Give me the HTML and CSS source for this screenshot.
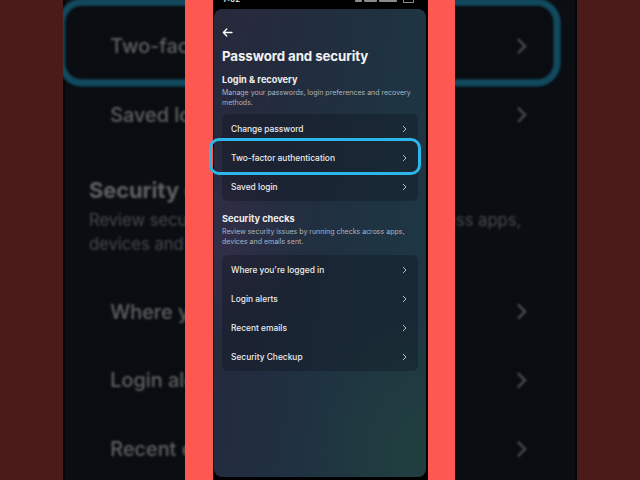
FILE: index.html
```html
<!DOCTYPE html>
<html lang="en">
<head>
<meta charset="utf-8">
<title>Password and security</title>
<link rel="stylesheet" href="styles.css">
</head>
<body>
<div class="frame">
  <div class="side"></div>
  <div class="stage">
    <div class="ghost" aria-hidden="true">
      <div class="screen">
        <div class="back"><svg width="11" height="9" viewBox="0 0 11 9"><path d="M10 4.5H1.5M4.8 1L1.3 4.5L4.8 8" fill="none" stroke="#fff" stroke-width="1.3" stroke-linecap="round" stroke-linejoin="round"/></svg></div>
        <h1 class="title">Password and security</h1>
        <h2 class="heading">Login &amp; recovery</h2>
        <p class="desc">Manage your passwords, login preferences and recovery methods.</p>
        <ul class="list list-first">
          <li class="row"><span>Change password</span><svg class="chev" width="5" height="8" viewBox="0 0 5 8"><path d="M1 1l3 3-3 3" fill="none" stroke="#b8bcc2" stroke-width="1"/></svg></li>
          <li class="row"><span>Two-factor authentication</span><svg class="chev" width="5" height="8" viewBox="0 0 5 8"><path d="M1 1l3 3-3 3" fill="none" stroke="#b8bcc2" stroke-width="1"/></svg></li>
          <li class="row"><span>Saved login</span><svg class="chev" width="5" height="8" viewBox="0 0 5 8"><path d="M1 1l3 3-3 3" fill="none" stroke="#b8bcc2" stroke-width="1"/></svg></li>
        </ul>
        <h2 class="heading heading-second">Security checks</h2>
        <p class="desc">Review security issues by running checks across apps, devices and emails sent.</p>
        <ul class="list">
          <li class="row"><span>Where you're logged in</span><svg class="chev" width="5" height="8" viewBox="0 0 5 8"><path d="M1 1l3 3-3 3" fill="none" stroke="#b8bcc2" stroke-width="1"/></svg></li>
          <li class="row"><span>Login alerts</span><svg class="chev" width="5" height="8" viewBox="0 0 5 8"><path d="M1 1l3 3-3 3" fill="none" stroke="#b8bcc2" stroke-width="1"/></svg></li>
          <li class="row"><span>Recent emails</span><svg class="chev" width="5" height="8" viewBox="0 0 5 8"><path d="M1 1l3 3-3 3" fill="none" stroke="#b8bcc2" stroke-width="1"/></svg></li>
          <li class="row"><span>Security Checkup</span><svg class="chev" width="5" height="8" viewBox="0 0 5 8"><path d="M1 1l3 3-3 3" fill="none" stroke="#b8bcc2" stroke-width="1"/></svg></li>
        </ul>
        <div class="highlight"></div>
      </div>
    </div>

    <div class="strip">
      <div class="phone">
        <div class="statusbar">
          <span class="time">7:02</span>
          <span class="icons"><i class="ic ic-a"></i><i class="ic ic-b"></i><i class="ic ic-c"></i><i class="ic ic-bat"></i></span>
        </div>
        <div class="screen screen-live">
          <div class="back"><svg width="11" height="9" viewBox="0 0 11 9"><path d="M10 4.5H1.5M4.8 1L1.3 4.5L4.8 8" fill="none" stroke="#fff" stroke-width="1.3" stroke-linecap="round" stroke-linejoin="round"/></svg></div>
          <h1 class="title">Password and security</h1>
          <h2 class="heading">Login &amp; recovery</h2>
          <p class="desc">Manage your passwords, login preferences and recovery methods.</p>
          <ul class="list list-first">
            <li class="row"><span>Change password</span><svg class="chev" width="5" height="8" viewBox="0 0 5 8"><path d="M1 1l3 3-3 3" fill="none" stroke="#b8bcc2" stroke-width="1"/></svg></li>
            <li class="row"><span>Two-factor authentication</span><svg class="chev" width="5" height="8" viewBox="0 0 5 8"><path d="M1 1l3 3-3 3" fill="none" stroke="#b8bcc2" stroke-width="1"/></svg></li>
            <li class="row"><span>Saved login</span><svg class="chev" width="5" height="8" viewBox="0 0 5 8"><path d="M1 1l3 3-3 3" fill="none" stroke="#b8bcc2" stroke-width="1"/></svg></li>
          </ul>
          <h2 class="heading heading-second">Security checks</h2>
          <p class="desc">Review security issues by running checks across apps, devices and emails sent.</p>
          <ul class="list">
            <li class="row"><span>Where you're logged in</span><svg class="chev" width="5" height="8" viewBox="0 0 5 8"><path d="M1 1l3 3-3 3" fill="none" stroke="#b8bcc2" stroke-width="1"/></svg></li>
            <li class="row"><span>Login alerts</span><svg class="chev" width="5" height="8" viewBox="0 0 5 8"><path d="M1 1l3 3-3 3" fill="none" stroke="#b8bcc2" stroke-width="1"/></svg></li>
            <li class="row"><span>Recent emails</span><svg class="chev" width="5" height="8" viewBox="0 0 5 8"><path d="M1 1l3 3-3 3" fill="none" stroke="#b8bcc2" stroke-width="1"/></svg></li>
            <li class="row"><span>Security Checkup</span><svg class="chev" width="5" height="8" viewBox="0 0 5 8"><path d="M1 1l3 3-3 3" fill="none" stroke="#b8bcc2" stroke-width="1"/></svg></li>
          </ul>
          <div class="highlight"></div>
        </div>
      </div>
    </div>
  </div>
  <div class="side"></div>
</div>
</body>
</html>
```

FILE: styles.css
```css
* { box-sizing: border-box; }
html, body {
  margin: 0;
  padding: 0;
  width: 640px;
  height: 480px;
  overflow: hidden;
  background: #4b1b19;
  font-family: Inter, "Noto Sans", "DejaVu Sans", sans-serif;
}
.frame {
  display: flex;
  width: 640px;
  height: 480px;
}
.side {
  width: 63px;
  flex: none;
  background: #4b1b19;
}
.stage {
  flex: 1;
  position: relative;
  overflow: hidden;
  background: #0a0d12;
  display: flex;
  justify-content: center;
  box-shadow: inset 2px 0 0 #050608, inset -2px 0 0 #050608;
}
.ghost {
  position: absolute;
  left: 7px;
  top: -307px;
  width: 212px;
  height: 468px;
  transform: scale(2.37);
  transform-origin: 0 0;
  filter: brightness(0.4) blur(0.45px);
}
.ghost .screen { height: 468px; }
.ghost .list { background: rgba(20, 26, 34, 0.25); }

.strip {
  position: relative;
  z-index: 1;
  display: flex;
  height: 480px;
  padding: 0 27px 0 28px;
  background: #fe5853;
}
.phone {
  width: 215px;
  background: #000;
  display: flex;
  flex-direction: column;
  padding: 0 2px 3px 1px;
}
.statusbar {
  height: 9px;
  overflow: hidden;
  display: flex;
  justify-content: space-between;
  align-items: flex-start;
  padding: 0 12px 0 9px;
  color: #e8e8e8;
  font-size: 8px;
  font-weight: 600;
}
.time { margin-top: -6px; line-height: 10px; }
.icons { display: flex; gap: 2px; }
.ic { display: block; height: 2px; background: #8a8a8a; border-radius: 0 0 1px 1px; }
.ic-a { width: 7px; }
.ic-b { width: 13px; }
.ic-c { width: 18px; }
.ic-bat { width: 11px; height: 3px; background: none; border: 1px solid #8a8a8a; border-top: none; margin-left: 4px; }

.screen {
  position: relative;
  display: flow-root;
  padding: 0 8px;
  border-radius: 8px;
  color: #ededed;
}
.screen-live {
  flex: 1;
  background:
    radial-gradient(ellipse 70% 30% at 0% 50%, rgba(66, 52, 86, 0.45), transparent 70%),
    radial-gradient(ellipse 80% 40% at 100% 95%, rgba(34, 70, 58, 0.55), transparent 75%),
    linear-gradient(100deg, #28293b 0%, #222c3e 30%, #1e3442 70%, #1e3744 100%);
}
.back {
  margin-top: 18px;
  height: 10px;
  display: flex;
  align-items: center;
}
.back svg { display: block; }
.title {
  margin: 11px 0 0;
  font-size: 13.3px;
  line-height: 17px;
  font-weight: 700;
  letter-spacing: -0.1px;
  color: #f2f2f2;
}
.heading {
  margin: 9px 0 0;
  font-size: 9.2px;
  line-height: 12px;
  font-weight: 700;
  color: #eeeeee;
}
.heading-second { margin-top: 12px; }
.desc {
  margin: 2px 0 0;
  font-size: 7px;
  line-height: 10px;
  color: #aeb4bd;
}
.list {
  list-style: none;
  margin: 8px 0 0;
  padding: 0;
  border-radius: 6px;
  background: rgba(12, 16, 24, 0.32);
}
.list-first { margin-top: 6px; }
.row {
  height: 29px;
  display: flex;
  align-items: center;
  justify-content: space-between;
  padding: 0 11px 0 9px;
  font-size: 8.4px;
  font-weight: 500;
  color: #ececec;
}
.chev { display: block; }
.highlight {
  position: absolute;
  left: -5px;
  top: 129px;
  width: 212px;
  height: 37px;
  border: 3px solid #2bb7ec;
  border-radius: 10px;
  pointer-events: none;
}
```
